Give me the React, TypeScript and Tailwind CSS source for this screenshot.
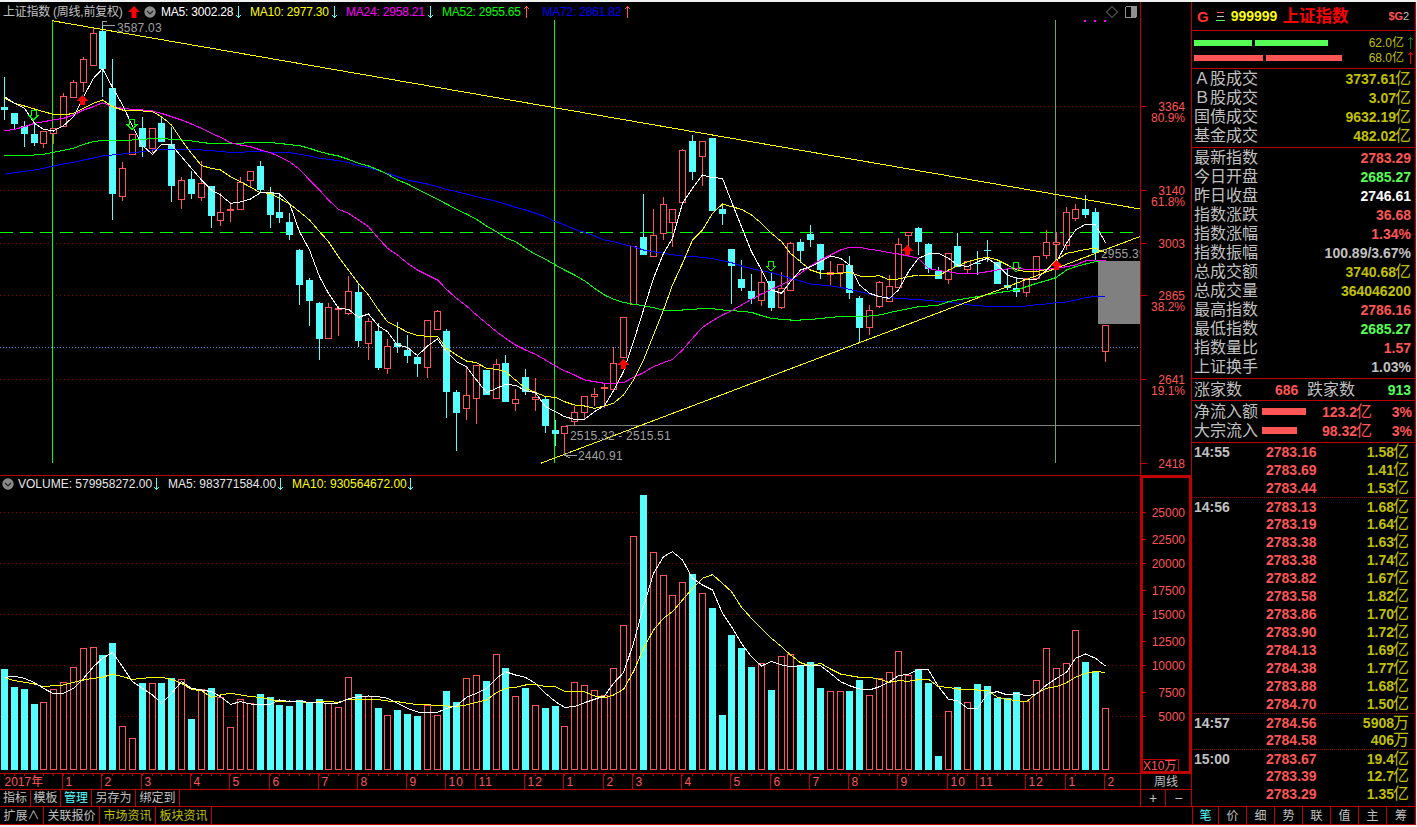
import React from "react";

const skip = new Set([4, 10, 16, 22, 28, 33, 39, 45, 51, 57, 62, 68, 74, 80, 86, 91, 97, 103, 109]);
const xs: number[] = [];
for (let i = 0; i < 113; i++) xs.push(i === 0 ? 4.5 : xs[i - 1] + (skip.has(i) ? 9 : 10));

const RED = "#ff5555";
const CYAN = "#55ffff";

// type (1 red, 0 cyan), high, top, bottom, low : y * 3
const candles: number[][] = [
  [0,231,321,329,360],[0,339,339,371,386],[0,363,378,402,440],[0,371,402,428,437],[1,394,394,428,443],[1,385,385,398,432],[1,280,289,377,377],[1,240,247,290,290],[1,170,178,247,275],[1,85,100,194,194],
  [0,66,94,206,290],[0,177,264,581,659],[1,487,505,587,602],[1,403,403,463,463],[0,352,384,440,470],[1,385,385,443,460],[0,350,369,425,425],[0,380,432,557,605],[1,532,541,598,626],[0,514,538,581,596],
  [1,484,550,590,604],[0,558,558,647,683],[1,580,637,661,677],[1,606,628,631,665],[1,530,546,626,626],[1,514,514,541,565],[0,483,498,570,575],[0,562,576,645,683],[0,585,636,653,668],[0,640,666,705,720],
  [0,748,750,854,914],[0,835,840,902,978],[0,907,910,1016,1080],[1,910,922,1013,1013],[1,918,924,928,1008],[1,828,874,940,945],[0,850,876,1022,1040],[1,955,964,1030,1080],[0,970,993,1104,1110],[1,1018,1039,1103,1122],
  [0,965,1029,1040,1058],[0,1005,1051,1067,1088],[0,1065,1071,1091,1130],[1,961,961,1102,1133],[1,930,934,986,990],[0,987,993,1175,1253],[0,1170,1176,1238,1352],[1,1100,1186,1223,1260],[1,1096,1096,1193,1272],[0,1110,1110,1185,1185],
  [1,1077,1093,1193,1193],[0,1065,1089,1206,1206],[1,1167,1198,1208,1233],[0,1108,1131,1175,1186],[1,1134,1191,1196,1232],[0,1187,1197,1277,1298],[0,1260,1291,1301,1338],[1,1279,1279,1300,1363],[1,1217,1237,1264,1277],[1,1189,1189,1237,1260],
  [1,1165,1183,1187,1218],[1,1152,1160,1165,1225],[1,1042,1090,1168,1168],[1,952,952,1072,1072],[1,738,738,912,912],[0,582,712,764,764],[1,627,705,767,767],[1,590,612,700,720],[1,628,628,665,742],[1,447,450,605,605],
  [0,405,423,515,540],[1,423,423,467,557],[0,414,414,632,632],[0,615,628,641,675],[0,747,747,797,912],[0,780,837,864,873],[0,822,873,897,912],[1,810,847,901,917],[0,818,843,924,932],[1,817,865,920,928],
  [1,725,730,869,869],[0,717,725,753,788],[0,675,702,720,740],[0,732,732,810,836],[1,783,817,823,858],[1,793,793,816,865],[0,768,795,879,897],[0,887,895,984,1028],[1,915,931,980,1005],[1,842,847,917,923],
  [1,825,859,902,902],[1,715,732,860,860],[1,697,697,704,760],[0,682,685,725,765],[0,728,732,807,818],[0,800,813,836,836],[1,760,760,838,852],[0,700,738,802,802],[1,782,782,806,820],[0,753,790,791,824],
  [0,720,750,751,785],[0,785,785,852,852],[0,805,855,865,870],[0,830,863,875,890],[1,835,835,875,890],[1,768,768,835,835],[1,690,726,764,777],[1,695,726,733,810],[1,620,637,735,750],[1,612,628,654,663],
  [0,585,628,645,655],[0,625,636,760,780],[1,976,976,1052,1085],
];

const ma5 = [290,310,325,370,388,393,377,350,290,235,206,262,315,378,437,463,433,435,470,505,540,570,585,610,606,597,578,578,582,610,695,750,830,880,925,928,952,942,978,995,1035,1042,1067,1038,1017,1055,1085,1100,1140,1178,1165,1153,1156,1172,1178,1220,1235,1250,1258,1258,1235,1217,1172,1115,1025,930,835,760,715,610,565,525,533,535,605,680,755,810,870,880,845,810,800,785,768,775,795,855,880,890,895,870,815,775,762,760,775,795,800,785,775,795,825,835,838,838,810,785,730,690,673,675,728];
const ma10 = [295,310,318,327,335,343,345,340,325,310,300,320,330,330,333,335,350,375,420,460,497,505,510,530,545,562,578,580,595,612,635,660,695,725,770,810,850,885,930,965,980,997,1006,1009,1009,1045,1065,1083,1088,1105,1108,1115,1140,1165,1177,1190,1192,1205,1215,1218,1225,1218,1210,1185,1140,1080,1005,930,855,790,720,690,640,612,620,628,645,670,700,725,760,785,810,820,820,820,817,828,830,827,840,837,830,825,825,828,810,798,785,777,772,780,795,810,815,815,808,780,760,755,748,745,758];
const ma24 = [393,388,380,370,365,360,355,345,330,320,308,320,325,328,330,333,340,350,360,372,385,400,412,428,435,440,450,458,470,485,508,540,570,600,628,640,660,680,715,745,765,790,810,825,840,868,895,918,945,970,995,1015,1035,1050,1063,1080,1098,1112,1125,1140,1145,1150,1150,1148,1132,1118,1100,1088,1078,1050,1015,982,962,945,932,915,898,882,868,855,840,820,798,780,765,750,742,742,748,752,758,762,768,775,805,812,815,820,820,820,815,810,807,805,808,810,808,805,800,795,783,780,780];
const ma52 = [468,467,466,465,463,457,451,445,433,425,421,421,421,420,418,416,415,418,420,423,427,431,431,430,430,427,427,428,430,434,437,445,455,462,468,478,490,498,510,523,540,552,568,583,598,612,628,642,658,678,695,713,725,745,763,778,795,810,825,842,865,885,898,907,913,917,923,930,930,930,928,926,926,930,932,934,937,947,955,958,960,960,958,956,952,950,950,950,948,945,938,932,926,920,918,916,905,900,895,890,884,878,874,870,860,850,842,832,810,800,792,785,780];
const ma72 = [523,518,514,510,505,498,492,487,480,474,468,465,462,458,455,450,448,448,448,449,450,452,455,457,457,455,455,457,457,458,463,468,475,478,482,488,497,503,512,520,530,540,546,552,560,568,575,582,590,597,604,612,622,630,640,650,665,675,688,697,708,720,725,733,740,750,755,760,764,768,770,772,776,782,788,798,806,812,818,826,835,843,852,855,858,862,868,875,882,890,893,895,897,898,902,904,906,910,914,917,919,920,920,920,918,914,912,908,906,900,893,889,888];

const vols: number[] = [597,651,657,702,697,658,637,592,535,532,555,519,769,805,639,640,639,624,628,747,658,654,681,772,688,700,672,681,705,708,690,696,687,700,712,622,672,678,714,736,720,732,738,705,736,663,696,625,616,633,553,594,679,654,706,714,708,769,637,646,661,675,595,466,199,75,247,316,376,337,312,370,414,735,495,534,591,580,660,559,553,585,576,654,664,664,663,630,676,625,607,544,616,598,639,858,724,652,697,642,648,684,684,667,694,631,535,595,580,481,576,603,715];
const volRed = new Set([4,5,6,7,8,9,12,13,15,18,20,22,23,24,25,33,34,35,37,39,43,44,47,48,50,52,54,57,58,59,60,61,62,63,64,66,67,68,69,71,77,79,80,84,85,88,89,90,91,92,96,98,104,105,106,107,108,109,112]);
const vma5 = [622,619,625,638,655,671,670,655,625,590,565,547,590,635,655,675,700,670,635,655,660,665,680,703,695,702,703,703,690,695,693,698,698,700,699,686,680,678,680,685,700,715,726,727,727,715,708,682,670,655,625,605,615,622,640,670,695,712,710,698,688,678,640,608,520,410,310,260,245,270,325,345,360,430,470,520,560,588,574,585,590,587,585,587,610,635,647,657,660,650,635,617,613,598,600,650,688,692,715,716,670,665,675,670,678,672,645,625,607,565,552,565,588];
const vma10 = [623,632,637,642,650,647,645,637,630,625,622,612,620,628,625,622,622,628,640,658,662,682,675,670,675,680,682,688,695,693,695,698,695,695,697,688,688,688,689,693,695,700,704,704,707,708,710,705,697,690,668,655,652,645,643,650,650,664,664,665,678,683,675,658,605,535,480,445,425,390,355,325,314,340,365,412,445,475,505,530,555,578,588,580,597,612,617,622,622,628,637,632,634,629,628,650,652,657,658,660,660,682,688,692,695,670,655,650,638,622,610,605,607];

const snap = (z: number) => Math.round(z / 3);
const pts = (a: number[], off = 0) => a.map((z, i) => `${xs[i]},${off + z / 3}`).join(" ");

const gridPrice = [106.5, 190.5, 243.5, 295.5, 379.5];
const gridVol = [512.5, 563.5, 614.5, 665.5, 716.5];
const seps = [62.5,101.5,141.5,190.5,229.5,269.5,318.5,357.5,406.5,445.5,475.5,524.5,563.5,603.5,632.5,681.5,730.5,770.5,809.5,848.5,897.5,947.5,976.5,1025.5,1065.5,1104.5];
const sepLabels = ["1","2","3","4","5","6","7","8","9","10","11","12","1","2","3","4","5","6","7","8","9","10","11","12","1","2"];

function UpSolid({ x, y }: { x: number; y: number }) {
  return <polygon points={`${x},${y} ${x + 5.5},${y + 5.5} ${x + 2.5},${y + 5.5} ${x + 2.5},${y + 10} ${x - 2.5},${y + 10} ${x - 2.5},${y + 5.5} ${x - 5.5},${y + 5.5}`} fill="#ff0000" />;
}
function DownHollow({ x, y }: { x: number; y: number }) {
  return <polygon points={`${x - 2.5},${y} ${x + 2.5},${y} ${x + 2.5},${y + 5} ${x + 5},${y + 5} ${x},${y + 10} ${x - 5},${y + 5} ${x - 2.5},${y + 5}`} fill="none" stroke="#00ff00" />;
}

function PriceChart() {
  return (
    <svg width={1140} height={455} viewBox="0 20 1140 455" shapeRendering="crispEdges" className="block">
      {gridPrice.map((y) => <line key={y} x1={0} x2={1140} y1={y} y2={y} stroke="#900000" strokeDasharray="1 3" />)}
      <line x1={0} x2={1140} y1={347.5} y2={347.5} stroke="#5588cc" strokeDasharray="1 2" />
      <line x1={0} x2={1140} y1={232.5} y2={232.5} stroke="#00ff00" strokeDasharray="13 7" />
      <line x1={566} x2={1140} y1={425.5} y2={425.5} stroke="#808080" />
      <line x1={52.5} x2={52.5} y1={20} y2={463} stroke="#00ff00" />
      <line x1={554.5} x2={554.5} y1={20} y2={463} stroke="#00ff00" />
      <line x1={1055.5} x2={1055.5} y1={20} y2={463} stroke="#6aa86a" />
      <rect x={1098} y={261} width={42} height={63} fill="#808080" />
      {candles.map((c, i) => {
        const x = xs[i];
        const [t, hi, top, bot, lo] = c;
        const col = t ? RED : CYAN;
        return (
          <g key={i}>
            <line x1={x} x2={x} y1={snap(hi)} y2={snap(lo)} stroke={col} />
            {t ? (
              <rect x={x - 3} y={snap(top) + 0.5} width={6} height={Math.max(1, snap(bot) - snap(top))} fill="#000" stroke={col} />
            ) : (
              <rect x={x - 3.5} y={snap(top)} width={7} height={Math.max(1, snap(bot) - snap(top))} fill={col} />
            )}
          </g>
        );
      })}
      <polyline points={pts(ma72)} fill="none" stroke="#0000ff" />
      <polyline points={pts(ma52)} fill="none" stroke="#00ff00" />
      <polyline points={pts(ma24)} fill="none" stroke="#ff00ff" />
      <polyline points={pts(ma10)} fill="none" stroke="#ffff00" />
      <polyline points={pts(ma5)} fill="none" stroke="#ffffff" />
      <line x1={52} y1={20.7} x2={1140} y2={209} stroke="#ffff00" />
      <line x1={540.7} y1={463.3} x2={1140} y2={236.5} stroke="#ffff00" />
      <UpSolid x={82.5} y={95} />
      <UpSolid x={623} y={359} />
      <UpSolid x={907.5} y={245} />
      <UpSolid x={1056} y={260} />
      <DownHollow x={33.5} y={110} />
      <DownHollow x={132} y={119.5} />
      <DownHollow x={771} y={261} />
      <DownHollow x={1016} y={262} />
      <rect x={1084} y={20} width={2} height={2} fill="#ff00ff" />
      <rect x={1094} y={20} width={2} height={2} fill="#ff00ff" />
      <rect x={1104} y={20} width={2} height={2} fill="#ff00ff" />
      <polyline points="106.5,21.5 102.5,21.5 102.5,25.5 115,25.5" fill="none" stroke="#a0a0a0" />
      <text x={117} y={27.5} fontSize={12} fill="#a0a0a0" dominantBaseline="central" letterSpacing={0.2}>3587.03</text>
      <text x={570} y={435.5} fontSize={12} fill="#a0a0a0" dominantBaseline="central" letterSpacing={0.2}>2515.32 - 2515.51</text>
      <polyline points="570,452 564,455 577,455 564,455 570,458" fill="none" stroke="#a0a0a0" />
      <text x={578} y={455.5} fontSize={12} fill="#a0a0a0" dominantBaseline="central" letterSpacing={0.2}>2440.91</text>
      <text x={1101} y={253.5} fontSize={12} fill="#a0a0a0" dominantBaseline="central" letterSpacing={0.2}>2955.39</text>
    </svg>
  );
}

function VolumeChart() {
  return (
    <svg width={1140} height={281} viewBox="0 492 1140 281" shapeRendering="crispEdges" className="block">
      {gridVol.map((y) => <line key={y} x1={0} x2={1140} y1={y} y2={y} stroke="#900000" strokeDasharray="1 3" />)}
      {vols.map((z, i) => {
        const x = xs[i];
        const top = 470 + snap(z);
        return volRed.has(i) ? (
          <rect key={i} x={x - 3} y={top + 0.5} width={6} height={769 - top} fill="#000" stroke={RED} />
        ) : (
          <rect key={i} x={x - 3.5} y={top} width={7} height={769.5 - top} fill={CYAN} />
        );
      })}
      <polyline points={pts(vma10, 470)} fill="none" stroke="#ffff00" />
      <polyline points={pts(vma5, 470)} fill="none" stroke="#ffffff" />
    </svg>
  );
}

function Arrow({ up, color }: { up?: boolean; color: string }) {
  return (
    <svg width={7} height={12} viewBox="0 0 7 12" shapeRendering="crispEdges" className="block shrink-0">
      <line x1={3.5} x2={3.5} y1={0} y2={12} stroke={color} />
      {up ? <polyline points="1,3 3.5,0.5 6,3" fill="none" stroke={color} /> : <polyline points="1,9 3.5,11.5 6,9" fill="none" stroke={color} />}
    </svg>
  );
}

function Chevron() {
  return (
    <svg width={12} height={12} viewBox="0 0 12 12" className="block shrink-0">
      <circle cx={6} cy={6} r={5.7} fill="#8a8a8a" />
      <polyline points="3,5 6,8 9,5" fill="none" stroke="#222" strokeWidth={1.2} />
    </svg>
  );
}

const priceLegend = [
  { t: "MA5: 3002.28", c: "text-[#ffffff]", w: "w-[89px]", a: CYAN, up: false },
  { t: "MA10: 2977.30", c: "text-[#ffff00]", w: "w-[96px]", a: CYAN, up: false },
  { t: "MA24: 2958.21", c: "text-[#ff00ff]", w: "w-[96px]", a: CYAN, up: false },
  { t: "MA52: 2955.65", c: "text-[#00ff00]", w: "w-[96.5px]", a: RED, up: true },
  { t: "MA72: 2861.82", c: "text-[#0000ff]", w: "w-[96.5px] ml-[4px]", a: RED, up: true },
];

function PricePane() {
  return (
    <div className="flex h-[474px] border-b border-[#c00000]">
      <div className="w-[1140px] flex flex-col">
        <div className="h-[18px] flex items-center text-[12px] leading-none pt-[1px]">
          <span className="ml-[3px] w-[123px] text-[#c0c0c0] whitespace-nowrap tracking-[-0.25px]">上证指数 (周线,前复权)</span>
          <svg width={12} height={12} viewBox="0 0 12 12" className="block shrink-0 ml-[2px]">
            <polygon points="6,0 12,6 8.5,6 8.5,12 3.5,12 3.5,6 0,6" fill="#ff0000" />
          </svg>
          <span className="ml-[4px]"><Chevron /></span>
          <div className="ml-[5px] flex">
            {priceLegend.map((l) => (
              <div key={l.t} className={`flex items-center ${l.w} ${l.c}`}>
                <span className="whitespace-nowrap tracking-[-0.2px]">{l.t}</span>
                <span className="ml-auto mr-[8.5px]"><Arrow up={l.up} color={l.a} /></span>
              </div>
            ))}
          </div>
          <div className="ml-auto flex items-center gap-[7px] pr-[3px]">
            <svg width={12} height={12} viewBox="0 0 12 12" className="block"><polygon points="6,0.5 11.5,6 6,11.5 0.5,6" fill="none" stroke="#808080" /></svg>
            <svg width={12} height={12} viewBox="0 0 12 12" className="block" shapeRendering="crispEdges"><rect x={0.5} y={0.5} width={11} height={11} rx={1.5} fill="none" stroke="#909090" /><rect x={6} y={1} width={5} height={10} fill="#909090" /></svg>
          </div>
        </div>
        <PriceChart />
      </div>
      <div className="w-[51px] border-l border-[#c00000]">
        <svg width={50} height={473} viewBox="1141 2 50 473" shapeRendering="crispEdges" className="block">
          {[106.5, 190.5, 243.5, 295.5, 379.5, 463.5].map((y) => <line key={y} x1={1141} x2={1147} y1={y} y2={y} stroke="#c00000" />)}
          {[["3364", 107], ["80.9%", 118], ["3140", 191], ["61.8%", 202], ["3003", 243.5], ["2865", 295.5], ["38.2%", 307], ["2641", 379.5], ["19.1%", 391], ["2418", 463.5]].map(([t, y]) => (
            <text key={t as string} x={1185} y={y as number} textAnchor="end" dominantBaseline="central" fontSize={12} fill={RED} shapeRendering="auto">{t}</text>
          ))}
        </svg>
      </div>
    </div>
  );
}

function VolumePane() {
  return (
    <div className="flex h-[298px] border-b border-[#c00000]">
      <div className="w-[1140px] flex flex-col">
        <div className="h-[16px] flex items-center text-[12px] leading-none pl-[2px]">
          <Chevron />
          <div className="ml-[4px] w-[150px] flex items-center text-[#e8e8e8]"><span className="whitespace-nowrap">VOLUME: 579958272.00</span><span className="ml-auto mr-[8.5px]"><Arrow color={CYAN} /></span></div>
          <div className="w-[124px] flex items-center text-[#e8e8e8]"><span className="whitespace-nowrap">MA5: 983771584.00</span><span className="ml-auto mr-[8.5px]"><Arrow color={CYAN} /></span></div>
          <div className="w-[130px] flex items-center text-[#ffff00]"><span className="whitespace-nowrap">MA10: 930564672.00</span><span className="ml-auto mr-[8.5px]"><Arrow color={CYAN} /></span></div>
        </div>
        <VolumeChart />
      </div>
      <div className="w-[51px] border-l border-[#c00000]">
        <div className="h-[297px] border-2 border-[#c00000]">
          <svg width={46} height={293} viewBox="1143 478 46 293" shapeRendering="crispEdges" className="block overflow-visible">
            {[512.5, 539.5, 563.5, 590.5, 614.5, 641.5, 665.5, 692.5, 716.5].map((y) => <line key={y} x1={1143} x2={1146} y1={y} y2={y} stroke="#c00000" />)}
            {[["25000", 512.5], ["22500", 539.5], ["20000", 563.5], ["17500", 590.5], ["15000", 614.5], ["12500", 641.5], ["10000", 665.5], ["7500", 692.5], ["5000", 716.5]].map(([t, y]) => (
              <text key={t as string} x={1185} y={y as number} textAnchor="end" dominantBaseline="central" fontSize={12} fill={RED} shapeRendering="auto">{t}</text>
            ))}
            <path d="M1142 759.5H1178.5V772" fill="none" stroke="#c00000" />
            <text x={1143} y={765.5} dominantBaseline="central" fontSize={12} fill={RED} shapeRendering="auto">X10万</text>
          </svg>
        </div>
      </div>
    </div>
  );
}

function DateRow() {
  return (
    <div className="flex h-[16px] border-b border-[#c00000]">
      <svg width={1140} height={15} viewBox="0 774 1140 15" shapeRendering="crispEdges" className="block">
        {xs.map((x, i) => <line key={i} x1={x} x2={x} y1={774} y2={776} stroke="#c00000" />)}
        <text x={4.5} y={782} dominantBaseline="central" fontSize={12} fill={RED} shapeRendering="auto">2017年</text>
        {seps.map((x, i) => (
          <g key={x}>
            <line x1={x} x2={x} y1={774} y2={789} stroke="#c00000" />
            <text x={x + 3} y={782} dominantBaseline="central" fontSize={12} fill={RED} letterSpacing={1} shapeRendering="auto">{sepLabels[i]}</text>
          </g>
        ))}
      </svg>
      <div className="w-[51px] border-l border-[#c00000] flex items-center justify-center text-[12px] leading-none text-[#c0c0c0]">周线</div>
    </div>
  );
}

function ToolCell({ w, t, c = "text-[#c0c0c0]" }: { w: string; t: string; c?: string }) {
  return <div className={`${w} ${c} border-r border-[#c00000] flex items-center justify-center text-[12px] leading-none whitespace-nowrap`}>{t}</div>;
}

function ToolRow() {
  return (
    <div className="flex h-[16px]">
      <div className="w-[1140px] flex">
        <ToolCell w="w-[31px]" t="指标" />
        <ToolCell w="w-[30px]" t="模板" />
        <ToolCell w="w-[31px]" t="管理" c="text-[#55ffff]" />
        <ToolCell w="w-[44px]" t="另存为" />
        <ToolCell w="w-[44px]" t="绑定到" />
      </div>
      <div className="w-[51px] border-l border-[#c00000] flex text-[#c0c0c0] text-[14px] leading-none">
        <div className="w-[25px] border-r border-[#c00000] flex items-center justify-center">+</div>
        <div className="flex-1 flex items-center justify-center">−</div>
      </div>
    </div>
  );
}

function Val({ v, c, unit, uc = c }: { v: string; c: string; unit?: string; uc?: string }) {
  return (
    <span className="flex items-center">
      <span className={`text-[14px] font-bold ${c}`}>{v}</span>
      {unit && <span className={`text-[16px] w-[16px] ml-[-1px] ${uc}`}>{unit}</span>}
    </span>
  );
}

const OL = "text-[#c0c000]";
const GY = "text-[#c0c0c0]";
const RD = "text-[#ff5555]";
const GN = "text-[#55ff55]";

const turnover = [
  ["Ａ股成交", "3737.61", "亿"],
  ["Ｂ股成交", "3.07", "亿"],
  ["国债成交", "9632.19", "亿"],
  ["基金成交", "482.02", "亿"],
];
const stats: [string, string, string, string?][] = [
  ["最新指数", "2783.29", RD],
  ["今日开盘", "2685.27", GN],
  ["昨日收盘", "2746.61", "text-[#ffffff]"],
  ["指数涨跌", "36.68", RD],
  ["指数涨幅", "1.34%", RD],
  ["指数振幅", "100.89/3.67%", GY],
  ["总成交额", "3740.68", OL, "亿"],
  ["总成交量", "364046200", OL],
  ["最高指数", "2786.16", RD],
  ["最低指数", "2685.27", GN],
  ["指数量比", "1.57", RD],
  ["上证换手", "1.03%", GY],
];
const ticks: [string, string, string, string, boolean?][] = [
  ["14:55","2783.16","1.58","亿"],["","2783.69","1.41","亿"],["","2783.44","1.53","亿"],
  ["14:56","2783.13","1.68","亿",true],["","2783.19","1.64","亿"],["","2783.38","1.63","亿"],["","2783.38","1.74","亿"],["","2783.82","1.67","亿"],["","2783.58","1.82","亿"],["","2783.86","1.70","亿"],["","2783.90","1.72","亿"],["","2784.13","1.69","亿"],["","2784.38","1.77","亿"],["","2783.88","1.68","亿"],["","2784.70","1.50","亿"],
  ["14:57","2784.56","5908","万",true],["","2784.58","406","万"],
  ["15:00","2783.67","19.4","亿",true],["","2783.39","12.7","亿"],["","2783.29","1.35","亿"],
];

function Row({ label, children }: { label: string; children: React.ReactNode }) {
  return (
    <div className="h-[19px] flex items-center justify-between pl-[2px] pr-[4px] leading-none">
      <span className="text-[16px] text-[#c0c0c0] whitespace-nowrap">{label}</span>
      {children}
    </div>
  );
}

function RightPanel() {
  return (
    <div className="w-[224px] border-r border-[#c00000] flex flex-col">
      <div className="h-[29px] border-b border-[#c00000] flex items-center leading-none">
        <span className="ml-[5px] text-[15px] font-bold text-[#ff3333]">G</span>
        <svg width={10} height={11} viewBox="0 0 10 11" shapeRendering="crispEdges" className="block ml-[7px]">
          <line x1={1} x2={8} y1={1.5} y2={1.5} stroke="#ff5555" />
          <line x1={1} x2={8} y1={5.5} y2={5.5} stroke="#c0c0c0" />
          <line x1={0} x2={9} y1={9.5} y2={9.5} stroke="#55ff55" />
        </svg>
        <span className="ml-[5px] text-[14px] font-bold text-[#ffff00]">999999</span>
        <span className="ml-[5px] text-[16.5px] font-bold text-[#ff0000] whitespace-nowrap">上证指数</span>
        <span className="ml-[40px] text-[11px] font-bold text-[#ff5555]">$G<span className="font-normal text-[#c0c0c0]">2</span></span>
      </div>
      <div className="h-[38px] border-b border-[#c00000] flex flex-col pl-[2px] pr-[1px] pt-[4px]">
        <div className="h-[15px] flex items-center gap-[3px]">
          <div className="w-[58px] h-[6px] bg-[#55ff55]" />
          <div className="w-[73px] h-[6px] bg-[#55ff55]" />
          <span className="ml-auto text-[12px] leading-none text-[#c0c000]">62.0亿</span>
          <Arrow up color="#008000" />
        </div>
        <div className="h-[15px] flex items-center gap-[3px]">
          <div className="w-[69px] h-[6px] bg-[#ff5555]" />
          <div className="w-[76px] h-[6px] bg-[#ff5555]" />
          <span className="ml-auto text-[12px] leading-none text-[#c0c000]">68.0亿</span>
          <Arrow up color="#ff0000" />
        </div>
      </div>
      <div className="h-[79px] border-b border-[#c00000]">
        {turnover.map(([l, v, u]) => <Row key={l} label={l}><Val v={v} c={OL} unit={u} /></Row>)}
      </div>
      <div className="h-[231px] border-b border-[#c00000]">
        {stats.map(([l, v, c, u]) => <Row key={l} label={l}><Val v={v} c={c} unit={u} /></Row>)}
      </div>
      <div className="h-[22px] border-b border-[#c00000] flex items-center pl-[2px] pr-[4px] leading-none">
        <span className="text-[16px] text-[#c0c0c0] w-[48px]">涨家数</span>
        <span className={`ml-[33px] text-[14px] font-bold ${RD} w-[23px]`}>686</span>
        <span className="ml-[9px] text-[16px] text-[#c0c0c0] w-[48px]">跌家数</span>
        <span className={`ml-auto text-[14px] font-bold ${GN}`}>913</span>
      </div>
      <div className="h-[42px] border-b border-[#c00000] pt-[1px]">
        <div className="h-[19px] flex items-center pl-[2px] pr-[3px] leading-none">
          <span className="text-[16px] text-[#c0c0c0] w-[64px] whitespace-nowrap">净流入额</span>
          <div className="ml-[4px] w-[44px] h-[7px] bg-[#ff5555]" />
          <div className="w-[66px] flex justify-end"><Val v="123.2" c={RD} unit="亿" /></div>
          <span className={`ml-auto text-[14px] font-bold ${RD}`}>3%</span>
        </div>
        <div className="h-[19px] flex items-center pl-[2px] pr-[3px] leading-none">
          <span className="text-[16px] text-[#c0c0c0] w-[64px] whitespace-nowrap">大宗流入</span>
          <div className="ml-[4px] w-[35px] h-[7px] bg-[#ff5555]" />
          <div className="ml-[9px] w-[66px] flex justify-end"><Val v="98.32" c={RD} unit="亿" /></div>
          <span className={`ml-auto text-[14px] font-bold ${RD}`}>3%</span>
        </div>
      </div>
      <div className="h-[363px]">
        {ticks.map(([t, p, v, u, d], i) => (
          <div key={i} className={`h-[18px] flex items-center leading-none pl-[2px] pr-[6px] ${d ? "border-t border-dotted border-[#a00000]" : ""}`}>
            <span className="w-[72px] text-[14px] font-bold text-[#c0c0c0]">{t}</span>
            <span className={`text-[14px] font-bold ${RD}`}>{p}</span>
            <span className="ml-auto"><Val v={v} c={OL} unit={u} /></span>
          </div>
        ))}
      </div>
    </div>
  );
}

function BottomRow() {
  const tabs = ["笔", "价", "细", "势", "联", "值", "主", "筹"];
  return (
    <div className="h-[19px] flex border-y border-[#c00000] w-[1416px]">
      <div className="w-[1193px] border-r border-[#c00000] flex">
        <ToolCell w="w-[44px]" t="扩展∧" />
        <ToolCell w="w-[56px]" t="关联报价" />
        <ToolCell w="w-[56px]" t="市场资讯" c="text-[#c0c000]" />
        <ToolCell w="w-[56px]" t="板块资讯" c="text-[#c0c000]" />
      </div>
      {tabs.map((t, i) => (
        <div
          key={t}
          className={`${i === 0 ? "w-[26px] text-[#55ffff]" : i === 7 ? "w-[29px] text-[#c0c0c0]" : "w-[28px] text-[#c0c0c0]"} border-r border-[#c00000] flex items-center justify-center text-[12px] leading-none`}
        >
          {t}
        </div>
      ))}
    </div>
  );
}

export default function App() {
  return (
    <div className="w-[1417px] h-[827px] bg-[#f0f0f0] pt-[2px] overflow-hidden font-['Liberation_Sans','Noto_Sans_CJK_SC',sans-serif]">
      <div className="w-[1416px] bg-black">
        <div className="flex h-[804px]">
          <div className="w-[1192px] border-r border-[#c00000] flex flex-col">
            <PricePane />
            <VolumePane />
            <DateRow />
            <ToolRow />
          </div>
          <RightPanel />
        </div>
        <BottomRow />
      </div>
    </div>
  );
}
